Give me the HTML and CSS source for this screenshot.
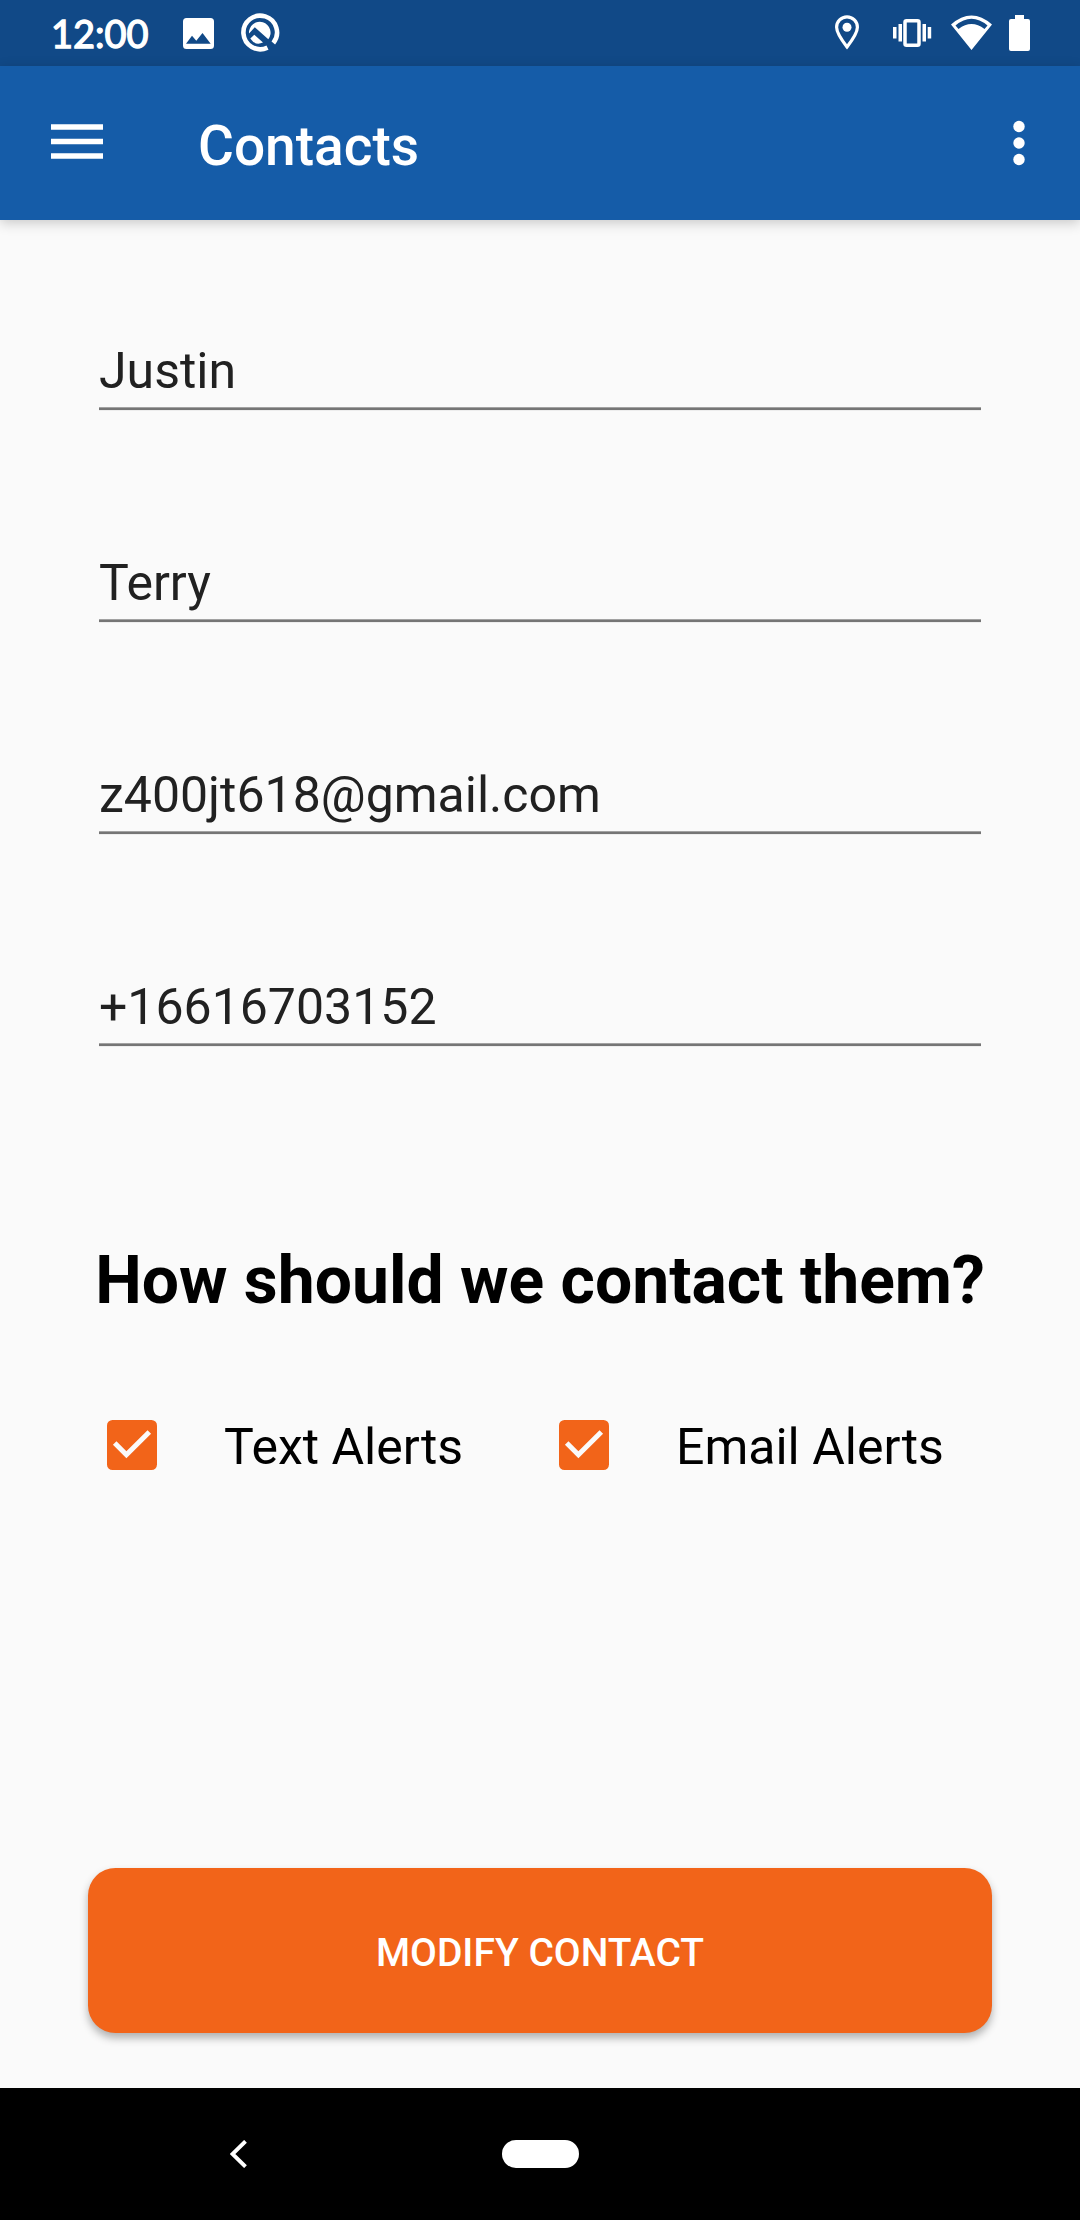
FILE: index.html
```html
<!DOCTYPE html>
<html lang="en">
<head>
<meta charset="utf-8">
<title>Contacts</title>
<link rel="stylesheet" href="styles.css">
</head>
<body>
<div class="screen">
  <header class="status-bar">
    <span class="clock">12:00</span>
    <svg class="status-left" viewBox="176 0 120 66" width="120" height="66">
      <path fill="#fff" fill-rule="evenodd" d="M186.500 18H210.500Q214 18 214 21.500V45.500Q214 49 210.500 49H186.500Q183 49 183 45.500V21.500Q183 18 186.500 18ZM186 43.700H210.700L202.500 33L196.300 40.800L192 35.800Z"/>
      <path fill="none" stroke="#fff" stroke-width="4.600" d="M267.500 47.600A16.800 16.800 0 1 1 273.300 43"/>
      <path fill="#fff" d="M249 33.500A10.800 10.800 0 1 1 268.300 39.300L254.800 27.200Z"/>
      <path fill="#fff" d="M250.300 38.600L254.300 34.700L263 42.600Q255 46 250.300 38.600Z"/>
    </svg>
    <svg class="status-right" viewBox="820 0 224 66" width="224" height="66">
      <path fill="none" stroke="#fff" stroke-width="3.200" d="M847 47C842 40.500 836.600 33 836.600 27.300A10.400 10.400 0 0 1 857.400 27.300C857.400 33 852 40.500 847 47Z"/>
      <circle cx="847" cy="27.300" r="4.500" fill="#fff"/>
      <rect x="905" y="20.800" width="14" height="24.400" rx="1.500" fill="none" stroke="#fff" stroke-width="3.500"/>
      <path fill="#fff" d="M893 27H896.500V38.500H893ZM898.500 24H902V41.500H898.500ZM922.500 24H926V41.500H922.500ZM927.700 27H931.200V38.500H927.700Z"/>
      <path fill="#fff" fill-rule="evenodd" d="M951 24.500Q971.500 6.500 992 24.500L971.500 50ZM955.500 25.500L958.500 29Q971.500 19 984.500 29L987.500 25.500Q971.500 12 955.500 25.500Z"/>
      <path fill="#fff" d="M1015 15H1024V19H1028Q1030 19 1030 21V49Q1030 51 1028 51H1011Q1009 51 1009 49V21Q1009 19 1011 19H1015Z"/>
    </svg>
  </header>
  <div class="app-bar">
    <svg class="menu" width="52" height="36" viewBox="0 0 52 36"><path fill="#fff" d="M0 .2H52V5.700H0ZM0 14.700H52V20.200H0ZM0 29.200H52V34.700H0Z"/></svg>
    <h1 class="title">Contacts</h1>
    <svg class="overflow" width="12" height="46" viewBox="0 0 12 46" fill="#fff"><circle cx="6" cy="6.500" r="5.700"/><circle cx="6" cy="23" r="5.700"/><circle cx="6" cy="39.500" r="5.700"/></svg>
  </div>
  <main class="content">
    <div class="field">Justin</div>
    <div class="field">Terry</div>
    <div class="field">z400jt618@gmail.com</div>
    <div class="field">+16616703152</div>
    <h2 class="question">How should we contact them?</h2>
    <div class="options">
      <div class="option">
        <svg class="check" viewBox="0 0 50 50" width="50" height="50"><rect width="50" height="50" rx="5.500" fill="#f26419"/><path d="M7.700 23.100L19.400 34.800L42.300 11.900" fill="none" stroke="#fafafa" stroke-width="5"/></svg>
        <span>Text Alerts</span>
      </div>
      <div class="option">
        <svg class="check" viewBox="0 0 50 50" width="50" height="50"><rect width="50" height="50" rx="5.500" fill="#f26419"/><path d="M7.700 23.100L19.400 34.800L42.300 11.900" fill="none" stroke="#fafafa" stroke-width="5"/></svg>
        <span>Email Alerts</span>
      </div>
    </div>
    <button class="submit" type="button">MODIFY CONTACT</button>
  </main>
  <nav class="nav-bar">
    <svg class="back" width="17" height="28" viewBox="0 0 17 28"><path d="M15.500 1.300L2.500 14L15.500 26.700" fill="none" stroke="#fff" stroke-width="3.900"/></svg>
    <div class="home"></div>
  </nav>
</div>
</body>
</html>
```
FILE: styles.css
```css
* { box-sizing: border-box; }

body {
  margin: 0;
  font-family: Roboto, sans-serif;
  background: #fafafa;
}

.screen {
  display: flex;
  flex-direction: column;
  width: 1080px;
  height: 2220px;
  overflow: hidden;
}

.status-bar {
  display: flex;
  height: 66px;
  background: #114987;
  color: #fff;
}

.clock {
  width: 125px;
  margin-left: 51px;
  font: 400 38px/66px Lato, sans-serif;
  -webkit-text-stroke: 1.300px #fff;
}

.status-right { margin-left: 524px; }

.app-bar {
  display: flex;
  align-items: center;
  height: 154px;
  padding: 0 55px 0 51px;
  background: #155ca8;
  color: #fff;
  box-shadow: 0 3px 12px rgba(0, 0, 0, .2);
}

.menu { margin-bottom: 2px; }

.title {
  flex: 1;
  margin: 0 0 0 95px;
  padding-top: 6px;
  font-size: 55px;
  font-weight: 500;
  line-height: 64px;
}

.content {
  display: flex;
  flex-direction: column;
  height: 1868px;
  padding: 99px 88px 55px;
}

.field {
  height: 92px;
  margin: 0 11px 120px;
  padding-top: 23px;
  font-size: 50px;
  line-height: 58px;
  color: #212121;
  background: linear-gradient(#a2a2a2 0 1px, #757575 1px 3px, #ededed 3px 4px) bottom / 100% 4px no-repeat;
}

.question {
  margin: 75px 0 0;
  font-size: 66px;
  font-weight: 700;
  line-height: 78px;
  text-align: center;
  white-space: nowrap;
}

.options {
  display: grid;
  grid-template-columns: 452px 452px;
  margin-top: 92px;
}

.option {
  display: flex;
  align-items: center;
  gap: 67px;
  height: 66px;
  padding-left: 19px;
  font-size: 50px;
  line-height: 58px;
}

.option span { padding-top: 4px; }

.submit {
  height: 165px;
  margin-top: auto;
  padding: 5px 0 0;
  border: 0;
  border-radius: 27.500px;
  background: #f26419;
  color: #fff;
  font: 500 39px/46px Roboto, sans-serif;
  box-shadow: 0 5px 9px rgba(0, 0, 0, .3);
}

.nav-bar {
  display: flex;
  align-items: center;
  height: 132px;
  padding-left: 230px;
  background: #000;
}

.home {
  width: 77px;
  height: 28px;
  margin-left: 255px;
  border-radius: 14px;
  background: #fff;
}
```
